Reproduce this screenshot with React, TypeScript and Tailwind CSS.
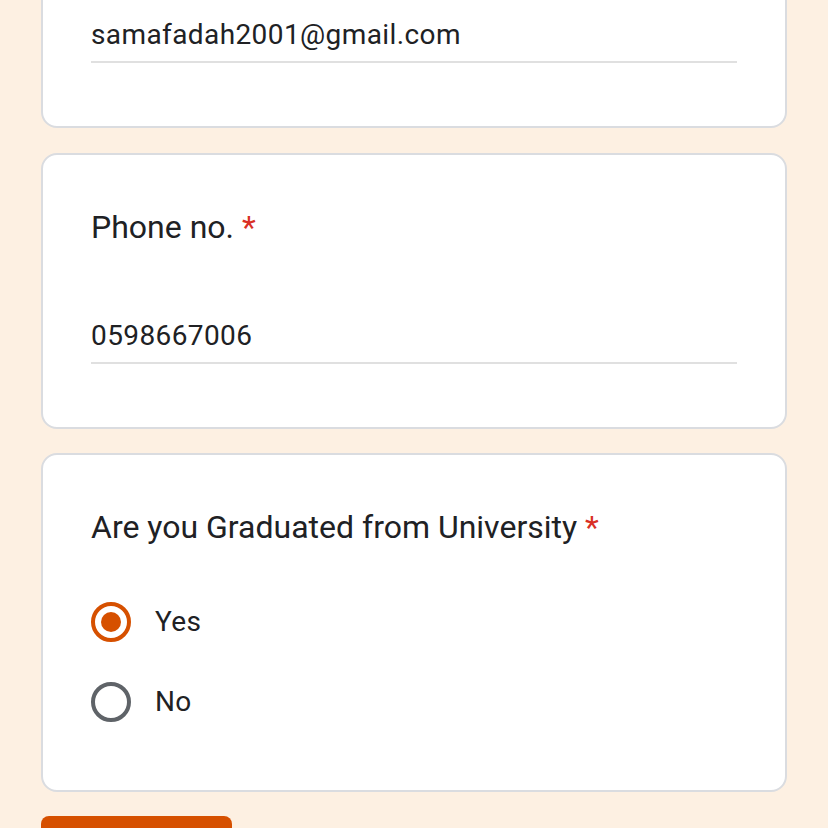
const font = { fontFamily: "Roboto, 'Noto Sans', sans-serif" };

function Card({ children, className = "" }: { children: React.ReactNode; className?: string }) {
  return (
    <div className={`rounded-[16px] border-2 border-[#dadce0] bg-white px-[48px] pt-[48px] ${className}`}>
      {children}
    </div>
  );
}

function Title({ text }: { text: string }) {
  return (
    <div className="text-[32px] leading-[48px] text-[#202124]">
      {text} <span className="text-[#d93025]">*</span>
    </div>
  );
}

function TextAnswer({ value }: { value: string }) {
  return (
    <div className="mt-[65px] border-b-2 border-[#e0e0e0] pb-[6px] text-[28px] leading-[40px] tracking-[0.4px] text-[#202124]">
      {value}
    </div>
  );
}

function Radio({ label, checked }: { label: string; checked?: boolean }) {
  return (
    <div className="flex h-[80px] items-center gap-[24px]">
      <div
        className={`flex h-[40px] w-[40px] items-center justify-center rounded-full border-[4px] ${
          checked ? "border-[#d65000]" : "border-[#5f6368]"
        }`}
      >
        {checked && <div className="h-[20px] w-[20px] rounded-full bg-[#d65000]" />}
      </div>
      <span className="text-[28px] tracking-[0.4px] text-[#202124]">{label}</span>
    </div>
  );
}

export default function App() {
  return (
    <div className="h-[828px] overflow-hidden bg-[#fdf0e2]" style={font}>
      <div className="flex flex-col gap-[26px] px-[41px]">
        <Card className="-mt-[148px] pb-[63px]">
          <Title text="Email" />
          <TextAnswer value="samafadah2001@gmail.com" />
        </Card>

        <Card className="-mt-[1px] pb-[63px]">
          <Title text="Phone no." />
          <TextAnswer value="0598667006" />
        </Card>

        <Card className="-mt-[2px] pb-[48px]">
          <Title text="Are you Graduated from University" />
          <div className="mt-[31px]">
            <Radio label="Yes" checked />
            <Radio label="No" />
          </div>
        </Card>

        <div>
          <button className="-mt-[2px] h-[72px] w-[191px] rounded-[8px] bg-[#d65000] text-[28px] font-medium text-white">
            Submit
          </button>
        </div>
      </div>
    </div>
  );
}
